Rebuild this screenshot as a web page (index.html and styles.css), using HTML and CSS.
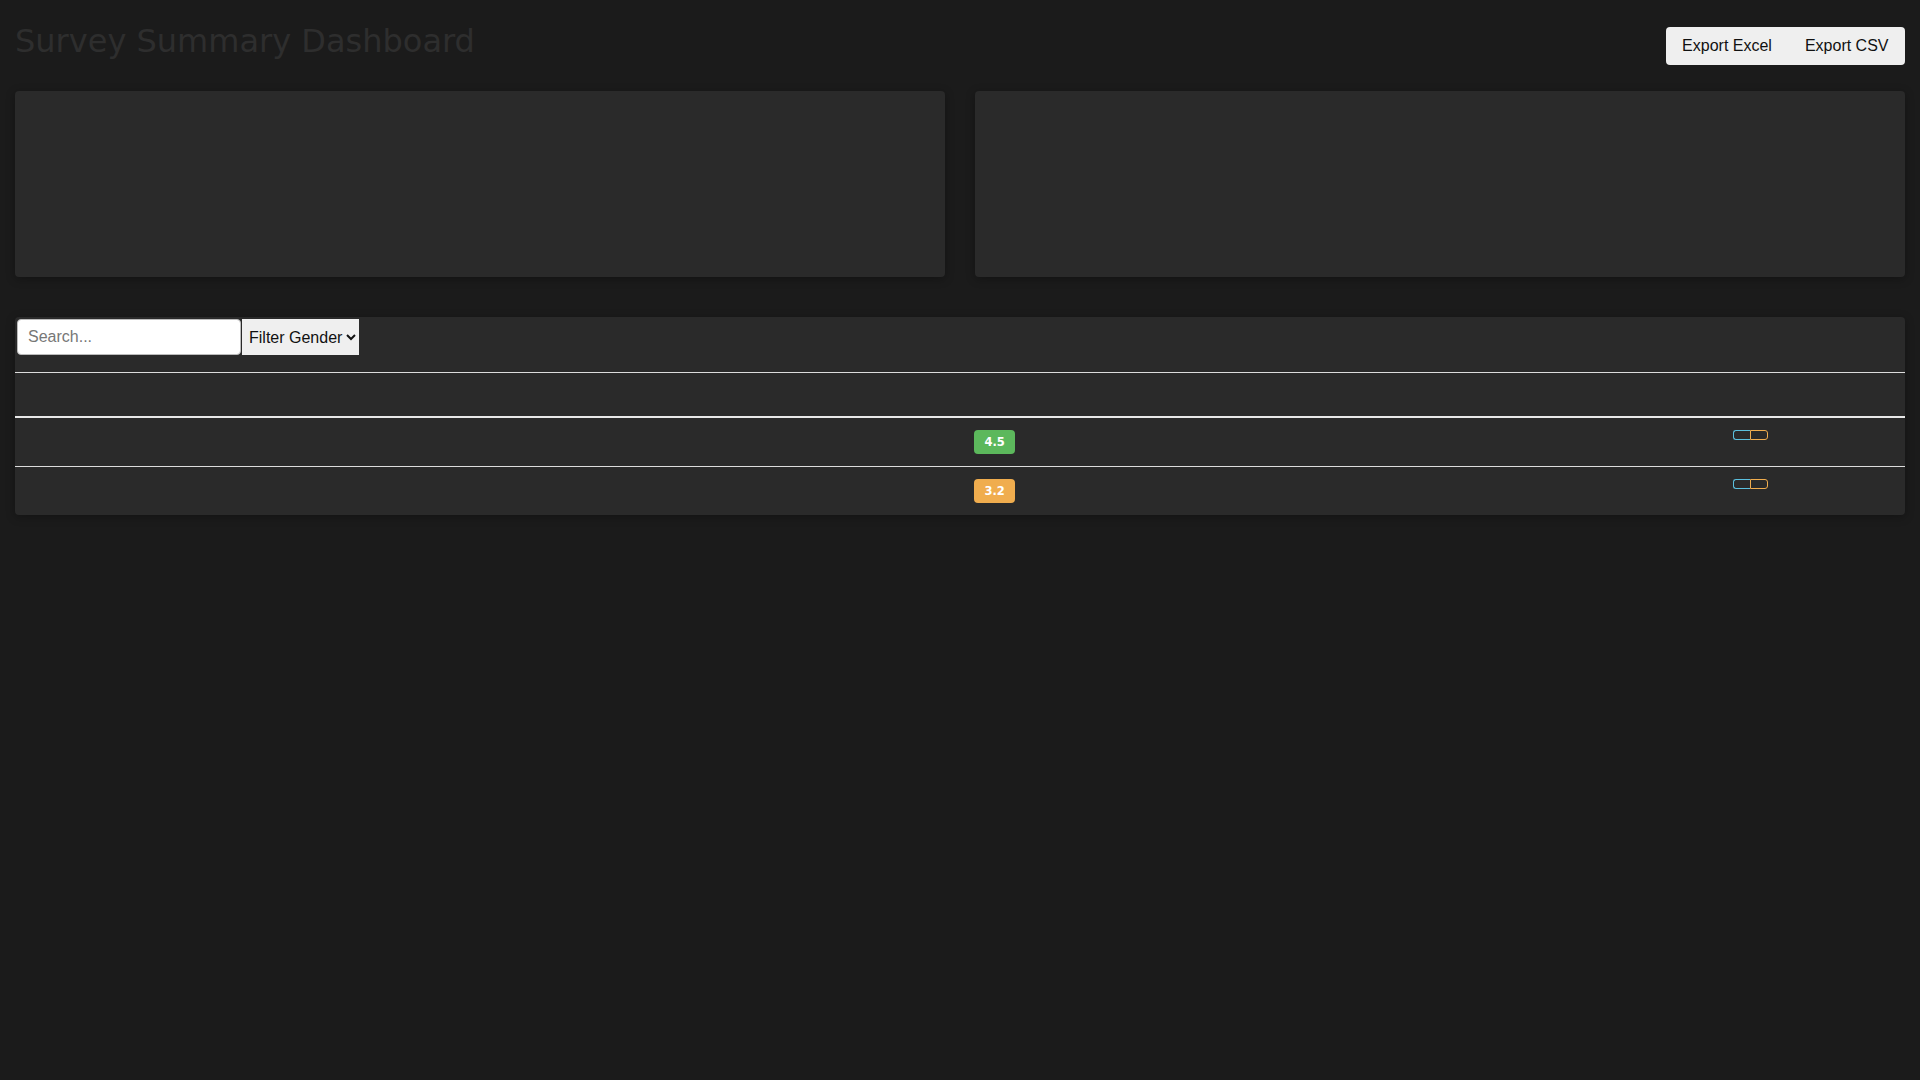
FILE: index.html
```html
<!DOCTYPE html>
<html lang="en">
<head>
<meta charset="utf-8">
<title>Survey Summary Dashboard</title>
<link rel="stylesheet" href="styles.css">
</head>
<body>
<div class="page">
  <header class="header">
    <h1 class="title">Survey Summary Dashboard</h1>
    <div class="export-group">
      <button class="export-btn">Export Excel</button>
      <button class="export-btn">Export CSV</button>
    </div>
  </header>

  <section class="charts">
    <div class="chart-card"></div>
    <div class="chart-card"></div>
  </section>

  <section class="table-card">
    <div class="toolbar">
      <input class="search" type="text" placeholder="Search...">
      <select class="filter">
        <option>Filter Gender</option>
        <option>Male</option>
        <option>Female</option>
      </select>
    </div>
    <table class="data-table">
      <colgroup>
        <col class="col-a">
        <col class="col-b">
        <col class="col-c">
      </colgroup>
      <thead>
        <tr><th>&nbsp;</th><th>&nbsp;</th><th>&nbsp;</th></tr>
      </thead>
      <tbody>
        <tr class="row-border">
          <td><div class="cell"></div></td>
          <td><div class="cell"><span class="badge badge-green">4.5</span></div></td>
          <td><div class="cell"><div class="act-group"><button class="act act-info"></button><button class="act act-warn"></button></div></div></td>
        </tr>
        <tr>
          <td><div class="cell"></div></td>
          <td><div class="cell"><span class="badge badge-orange">3.2</span></div></td>
          <td><div class="cell"><div class="act-group"><button class="act act-info"></button><button class="act act-warn"></button></div></div></td>
        </tr>
      </tbody>
    </table>
  </section>
</div>
</body>
</html>
```

FILE: styles.css
```css
html, body {
  margin: 0;
  padding: 0;
  background: #1b1b1b;
}

body {
  font-family: "DejaVu Sans", sans-serif;
  min-height: 1080px;
}

.page {
  padding: 0 15px 15px;
}

.header {
  display: flex;
  justify-content: space-between;
  align-items: flex-start;
  margin-bottom: 26px;
}

.title {
  margin: 23px 0 0 0;
  font-family: "DejaVu Sans", sans-serif;
  font-weight: normal;
  font-size: 32px;
  line-height: 37px;
  color: #2e2e2e;
}

.export-group {
  margin-top: 27px;
  display: flex;
  background: #efefef;
  border-radius: 4px;
}

.export-btn {
  font-family: "Liberation Sans", Arial, sans-serif;
  font-size: 16px;
  line-height: 18px;
  padding: 10px 16.5px;
  border: none;
  background: transparent;
  color: #111;
}

.charts {
  display: grid;
  grid-template-columns: 1fr 1fr;
  gap: 30px;
}

.chart-card {
  height: 186px;
  background: #2a2a2a;
  border-radius: 4px;
  box-shadow: 0 2px 10px rgba(0, 0, 0, 0.3);
}

.table-card {
  margin-top: 40px;
  background: #2a2a2a;
  border-radius: 4px;
  box-shadow: 0 2px 10px rgba(0, 0, 0, 0.3);
}

.toolbar {
  display: flex;
  align-items: flex-start;
  height: 56px;
  box-sizing: border-box;
  padding: 2px 0 0 2px;
  border-bottom: 1px solid #dcdcdc;
}

.search {
  box-sizing: border-box;
  width: 224px;
  height: 36px;
  padding: 0 10px;
  border: 1px solid #bbb;
  border-radius: 4px;
  background: #fff;
  font-family: "Liberation Sans", Arial, sans-serif;
  font-size: 16px;
  color: #222;
  margin: 0;
}

.search::placeholder {
  color: #777;
}

.filter {
  box-sizing: border-box;
  height: 36px;
  width: auto;
  margin: 0 0 0 1px;
  padding: 0 0 0 3px;
  border: none;
  border-radius: 0;
  background: #efefef;
  font-family: "Liberation Sans", Arial, sans-serif;
  font-size: 16px;
  color: #111;
}

.data-table {
  width: 100%;
  border-collapse: separate;
  border-spacing: 0;
  table-layout: fixed;
}

.col-a { width: 947px; }
.col-b { width: 759px; }
.col-c { width: auto; }

.data-table th {
  padding: 12px;
  line-height: 19px;
  font-size: 16px;
  text-align: left;
  border-bottom: 2px solid #e8e8e8;
}

.data-table td {
  padding: 12px;
  vertical-align: top;
}

.row-border td {
  border-bottom: 1px solid #dcdcdc;
}

.cell {
  height: 24px;
  display: flex;
  align-items: flex-start;
}

.badge {
  display: inline-block;
  padding: 5px 10.5px;
  font-family: "DejaVu Sans", sans-serif;
  font-weight: bold;
  font-size: 11.5px;
  line-height: 14px;
  color: #fff;
  border-radius: 4px;
}

.badge-green { background: #5cb85c; }
.badge-orange { background: #f0ad4e; }

.act-group {
  display: flex;
}

.act {
  box-sizing: border-box;
  height: 10px;
  padding: 0;
  margin: 0;
  background: transparent;
}

.act-info {
  width: 17px;
  border: 1px solid #5bc0de;
  border-right: none;
  border-radius: 3px 0 0 3px;
}

.act-warn {
  width: 18px;
  border: 1px solid #f0ad4e;
  border-radius: 0 3px 3px 0;
}
```
